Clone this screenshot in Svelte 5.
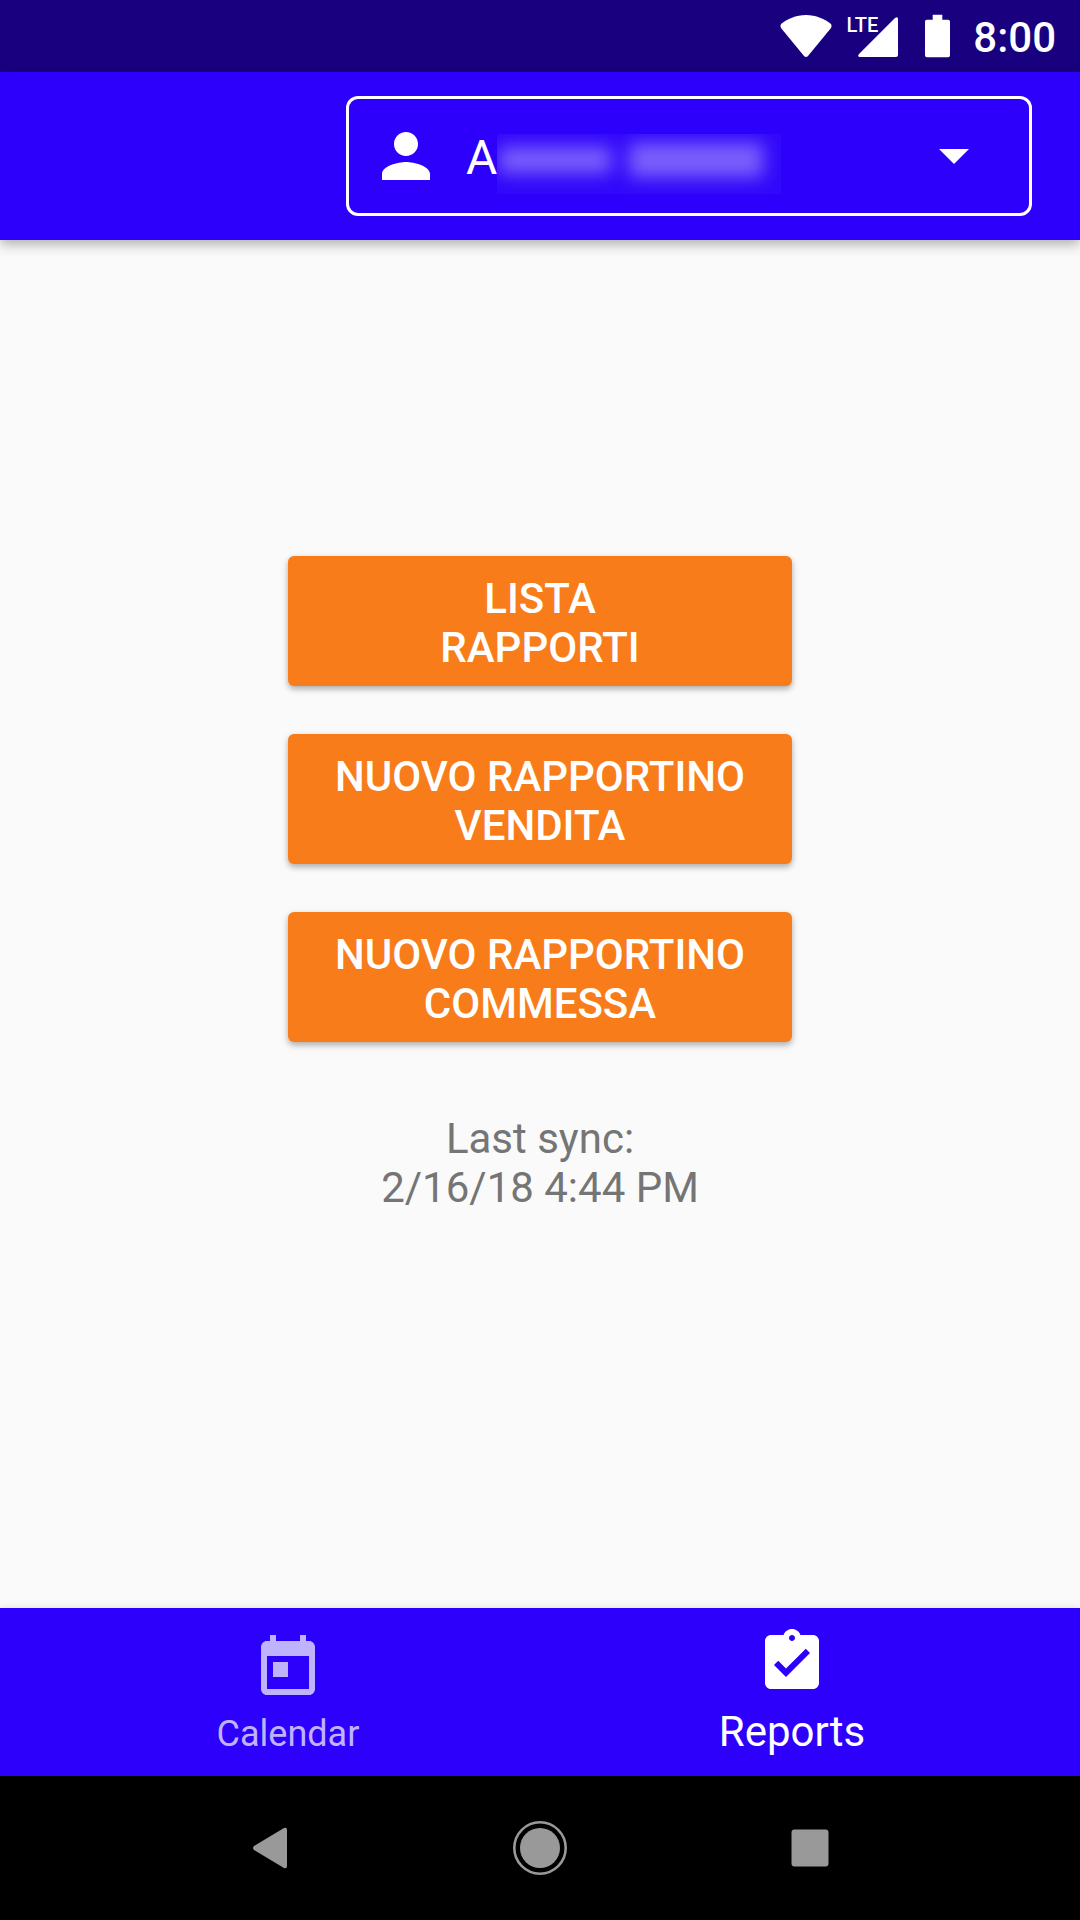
<script lang="ts">
  const actions: string[][] = [
    ['LISTA', 'RAPPORTI'],
    ['NUOVO RAPPORTINO', 'VENDITA'],
    ['NUOVO RAPPORTINO', 'COMMESSA'],
  ];

  let account: string = $state('a');
  let tab: string = $state('reports');
</script>

<div class="screen">
  <div class="status-bar">
    <svg class="wifi" viewBox="0 0 52 42" aria-hidden="true">
      <path d="M26 0C16 0 7 4 1 9Q0 11 1 13L24 41Q26 43 28 41L51 13Q52 11 51 9C45 4 36 0 26 0Z" />
    </svg>
    <div class="signal">
      <span class="lte">LTE</span>
      <svg viewBox="0 0 40 40" aria-hidden="true">
        <path d="M37 1Q40-1 40 2V38Q40 40 38 40H2Q-1 40 1 37Z" />
      </svg>
    </div>
    <svg class="battery" viewBox="0 0 26 44" aria-hidden="true">
      <path d="M8 0H18V5H24Q26 5 26 7V42Q26 44 24 44H2Q0 44 0 42V7Q0 5 2 5H8Z" />
    </svg>
    <span class="time">8:00</span>
  </div>

  <header class="app-bar">
    <label class="account">
      <svg class="icon" viewBox="0 0 24 24" aria-hidden="true">
        <path d="M12 12c2.21 0 4-1.79 4-4s-1.79-4-4-4-4 1.79-4 4 1.79 4 4 4zm0 2c-2.67 0-8 1.34-8 4v2h16v-2c0-2.66-5.33-4-8-4z" />
      </svg>
      <span class="picker">
        <select bind:value={account} aria-label="Account">
          <option value="a">A</option>
        </select>
        <span class="redacted"><i></i><i></i></span>
      </span>
      <svg class="caret" viewBox="0 0 30 15" aria-hidden="true">
        <path d="M0 0H30L15 15Z" />
      </svg>
    </label>
  </header>

  <main>
    <div class="actions">
      {#each actions as [first, second]}
        <button class="action">{first}<br />{second}</button>
      {/each}
    </div>
    <p class="sync">Last sync:<br />2/16/18 4:44 PM</p>
  </main>

  <nav class="tabs">
    <button class="tab" class:active={tab === 'calendar'} onclick={() => (tab = 'calendar')}>
      <svg class="icon" viewBox="0 0 24 24" aria-hidden="true">
        <path d="M19 3h-1V1h-2v2H8V1H6v2H5c-1.11 0-1.99.9-1.99 2L3 19c0 1.1.89 2 2 2h14c1.1 0 2-.9 2-2V5c0-1.1-.9-2-2-2zm0 16H5V8h14v11zM7 10h5v5H7z" />
      </svg>
      <span>Calendar</span>
    </button>
    <button class="tab" class:active={tab === 'reports'} onclick={() => (tab = 'reports')}>
      <svg class="icon" viewBox="0 0 24 24" aria-hidden="true">
        <path d="M19 3h-4.18C14.4 1.84 13.3 1 12 1s-2.4.84-2.82 2H5c-1.1 0-2 .9-2 2v14c0 1.1.9 2 2 2h14c1.1 0 2-.9 2-2V5c0-1.1-.9-2-2-2zm-7 0c.55 0 1 .45 1 1s-.45 1-1 1-1-.45-1-1 .45-1 1-1zm-2 14l-4-4 1.41-1.41L10 14.17l6.59-6.59L18 9l-8 8z" />
      </svg>
      <span>Reports</span>
    </button>
  </nav>

  <div class="system-nav">
    <button aria-label="Back">
      <svg viewBox="0 0 54 54" aria-hidden="true">
        <path d="M41 7Q44 6 44 9V45Q44 48 41 47L11 29Q9 27 11 25Z" />
      </svg>
    </button>
    <button aria-label="Home">
      <svg viewBox="0 0 54 54" aria-hidden="true">
        <circle cx="27" cy="27" r="20" />
        <circle cx="27" cy="27" r="25.7" fill="none" stroke="#999" stroke-width="2.6" />
      </svg>
    </button>
    <button aria-label="Overview">
      <svg viewBox="0 0 54 54" aria-hidden="true">
        <rect x="8.5" y="8.5" width="37" height="37" rx="3" />
      </svg>
    </button>
  </div>
</div>

<style>
  :global(body) {
    margin: 0;
    background: #fafafa;
  }

  .screen {
    display: flex;
    flex-direction: column;
    min-height: 100vh;
    font-family: Roboto, sans-serif;
    color: #fff;
  }

  svg {
    display: block;
    flex: none;
    fill: currentColor;
  }

  button,
  select {
    margin: 0;
    padding: 0;
    border: none;
    background: none;
    color: inherit;
    font-family: inherit;
    cursor: pointer;
  }

  .icon {
    width: 72px;
    height: 72px;
  }

  /* Status bar */
  .status-bar {
    display: flex;
    align-items: center;
    justify-content: flex-end;
    height: 72px;
    padding-right: 24px;
    background: #18007e;
  }

  .wifi {
    width: 52px;
    height: 42px;
    margin-right: 14px;
  }

  .signal {
    display: flex;
    align-items: flex-end;
    justify-content: flex-end;
    height: 42px;
    margin-right: 27px;
  }

  .signal svg {
    width: 40px;
    height: 40px;
    margin-left: -20px;
  }

  .lte {
    align-self: flex-start;
    font-size: 20px;
    font-weight: 500;
    line-height: 20px;
  }

  .battery {
    width: 25px;
    height: 44px;
    margin-right: 23px;
  }

  .time {
    padding-top: 3px;
    font-size: 42px;
    font-weight: 500;
    line-height: 48px;
  }

  /* App bar */
  .app-bar {
    z-index: 1;
    display: flex;
    justify-content: flex-end;
    padding: 24px 48px;
    background: #2c00fa;
    box-shadow: 0 4px 12px rgba(0, 0, 0, 0.32);
  }

  .account {
    box-sizing: border-box;
    display: flex;
    align-items: center;
    width: 686px;
    height: 120px;
    padding: 0 60px 0 21px;
    border: 3px solid #fff;
    border-radius: 12px;
  }

  .picker {
    position: relative;
    flex: 1;
    margin-left: 24px;
  }

  select {
    display: block;
    width: 100%;
    height: 64px;
    padding-top: 4px;
    appearance: none;
    font-size: 48px;
    line-height: 60px;
  }

  option {
    color: #000;
  }

  .redacted {
    position: absolute;
    top: 10px;
    left: 31px;
    box-sizing: border-box;
    display: flex;
    align-items: center;
    gap: 18px;
    width: 284px;
    height: 60px;
    padding: 0 18px 8px 2px;
    overflow: hidden;
    background: rgba(255, 255, 255, 0.03);
    pointer-events: none;
  }

  .redacted i {
    flex: 1;
    height: 26px;
    background: rgba(255, 255, 255, 0.36);
    filter: blur(9px);
  }

  .redacted i:last-child {
    flex-grow: 1.2;
    height: 34px;
  }

  .caret {
    width: 30px;
    height: 15px;
  }

  /* Content */
  main {
    flex: 1;
    display: flex;
    flex-direction: column;
    align-items: center;
    justify-content: center;
    gap: 72px;
    padding-bottom: 80px;
  }

  .actions {
    display: flex;
    flex-direction: column;
    gap: 48px;
    width: 504px;
  }

  .action {
    padding: 18px 0 14px;
    border-radius: 6px;
    background: #f87c1a;
    box-shadow: 0 3px 6px rgba(0, 0, 0, 0.32);
    font-size: 42px;
    font-weight: 500;
    line-height: 49px;
  }

  .sync {
    margin: 0;
    color: #757575;
    font-size: 42px;
    line-height: 49px;
    text-align: center;
  }

  /* Bottom tabs */
  .tabs {
    display: flex;
    justify-content: center;
    height: 168px;
    background: #2c00fa;
    box-shadow: 0 0 8px rgba(0, 0, 0, 0.1);
  }

  .tab {
    box-sizing: border-box;
    display: flex;
    flex-direction: column;
    align-items: center;
    justify-content: space-between;
    width: 504px;
    padding: 24px 0 18px;
    color: #c0b3fe;
    font-size: 36px;
    line-height: 48px;
  }

  .tab.active {
    padding-top: 18px;
    padding-bottom: 20px;
    color: #fff;
    font-size: 42px;
  }

  /* System navigation */
  .system-nav {
    display: flex;
    justify-content: center;
    height: 144px;
    background: #000;
    color: #999;
  }

  .system-nav button {
    display: grid;
    place-items: center;
    width: 25%;
  }

  .system-nav svg {
    width: 54px;
    height: 54px;
  }
</style>
